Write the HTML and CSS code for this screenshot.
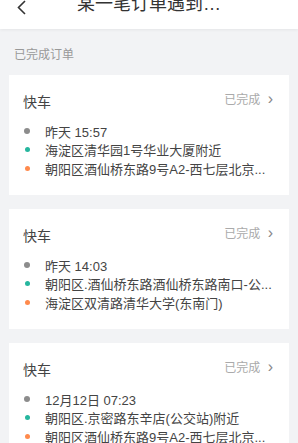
FILE: index.html
```html
<!DOCTYPE html>
<html lang="zh">
<head>
    <meta charset="UTF-8">
    <meta name="viewport" content="width=device-width, initial-scale=1.0">
    <title>订单</title>
    <link rel="stylesheet" href="styles.css">
</head>
<body>
    <div class="head">
        <svg class="back" width="12" height="16" viewBox="0 0 12 16">
            <path d="M9 1 L2.5 7.5 L9 14" fill="none" stroke="#333" stroke-width="1.6"/>
        </svg>
        <div class="title">某一笔订单遇到…</div>
    </div>
    <div class="section">已完成订单</div>
    <div class="list">
        <div class="card">
            <div class="card-top">
                <div class="kind">快车</div>
                <div class="status">已完成 <span class="arrow">›</span></div>
            </div>
            <div class="row"><span class="dot time"></span>昨天 15:57</div>
            <div class="row"><span class="dot from"></span>海淀区清华园1号华业大厦附近</div>
            <div class="row"><span class="dot to"></span>朝阳区酒仙桥东路9号A2-西七层北京...</div>
        </div>
        <div class="card">
            <div class="card-top">
                <div class="kind">快车</div>
                <div class="status">已完成 <span class="arrow">›</span></div>
            </div>
            <div class="row"><span class="dot time"></span>昨天 14:03</div>
            <div class="row"><span class="dot from"></span>朝阳区.酒仙桥东路酒仙桥东路南口-公...</div>
            <div class="row"><span class="dot to"></span>海淀区双清路清华大学(东南门)</div>
        </div>
        <div class="card">
            <div class="card-top">
                <div class="kind">快车</div>
                <div class="status">已完成 <span class="arrow">›</span></div>
            </div>
            <div class="row"><span class="dot time"></span>12月12日 07:23</div>
            <div class="row"><span class="dot from"></span>朝阳区.京密路东辛店(公交站)附近</div>
            <div class="row"><span class="dot to"></span>朝阳区酒仙桥东路9号A2-西七层北京...</div>
        </div>
    </div>
</body>
</html>
```

FILE: styles.css
```css
body {
    margin: 0;
    background: #f2f3f5;
    font-family: "Liberation Sans", "Noto Sans CJK SC", sans-serif;
    color: #333;
    overflow: hidden;
}
.head {
    height: 29px;
    background: white;
    display: flex;
    align-items: flex-start;
    overflow: hidden;
    box-shadow: 0 1px 3px rgba(0, 0, 0, 0.06);
    position: relative;
}
.back {
    margin-left: 16px;
    margin-top: 0;
}
.title {
    margin-left: 49px;
    margin-top: -9px;
    font-size: 18px;
    line-height: 26px;
    color: #333;
}
.section {
    padding: 18px 14px 0;
    height: 28px;
    font-size: 12px;
    line-height: 17px;
    color: #999;
}
.list {
    padding: 0 9px;
}
.card {
    background: white;
    height: 120px;
    margin-bottom: 14px;
    padding: 17px 16px 0 14px;
    box-sizing: border-box;
}
.card-top {
    display: flex;
    justify-content: space-between;
    align-items: center;
    height: 18px;
    margin-bottom: 12px;
}
.kind {
    font-size: 14px;
    color: #444;
}
.status {
    font-size: 12px;
    color: #aaa;
    margin-top: -4px;
}
.arrow {
    font-size: 16px;
    margin-left: 4px;
    color: #888;
}
.row {
    display: flex;
    align-items: center;
    height: 18.5px;
    font-size: 13px;
    color: #444;
    white-space: nowrap;
}
.dot {
    width: 5px;
    height: 5px;
    border-radius: 50%;
    margin-right: 15px;
    margin-left: 2px;
    flex-shrink: 0;
}
.dot.time {
    width: 6px;
    height: 6px;
    margin-left: 1px;
    background: #8c8c8c;
}
.dot.from {
    background: #26b69e;
}
.dot.to {
    background: #ff8a4c;
}
```
